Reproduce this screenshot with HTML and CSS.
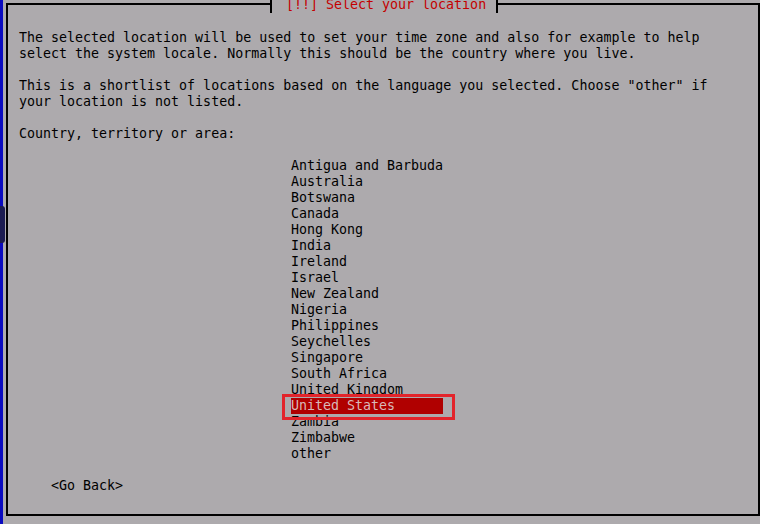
FILE: index.html
```html
<!DOCTYPE html>
<html lang="en">
<head>
<meta charset="utf-8">
<title>Select your location</title>
<link rel="stylesheet" href="styles.css">
</head>
<body>
<div class="screen">
  <div class="strip"><span class="handle"></span></div>
  <div class="stage">
    <section class="dialog">
      <header class="titlebar">
        <span class="rule"></span>
        <h1 class="title">[!!] Select your location</h1>
        <span class="rule"></span>
      </header>
      <div class="content">
        <p class="para">The selected location will be used to set your time zone and also for example to help<br>select the system locale. Normally this should be the country where you live.</p>
        <p class="para">This is a shortlist of locations based on the language you selected. Choose "other" if<br>your location is not listed.</p>
        <p class="para">Country, territory or area:</p>
        <ul class="list">
          <li class="item">Antigua and Barbuda</li>
          <li class="item">Australia</li>
          <li class="item">Botswana</li>
          <li class="item">Canada</li>
          <li class="item">Hong Kong</li>
          <li class="item">India</li>
          <li class="item">Ireland</li>
          <li class="item">Israel</li>
          <li class="item">New Zealand</li>
          <li class="item">Nigeria</li>
          <li class="item">Philippines</li>
          <li class="item">Seychelles</li>
          <li class="item">Singapore</li>
          <li class="item">South Africa</li>
          <li class="item">United Kingdom</li>
          <li class="item selected">United States<span class="mark"></span></li>
          <li class="item">Zambia</li>
          <li class="item">Zimbabwe</li>
          <li class="item">other</li>
        </ul>
        <div class="buttons"><span class="button">&lt;Go Back&gt;</span></div>
      </div>
    </section>
  </div>
</div>
</body>
</html>
```

FILE: styles.css
```css
html, body {
  margin: 0;
  padding: 0;
  background: #adaaad;
  height: 100%;
  overflow: hidden;
}

body {
  font-family: "DejaVu Sans Mono", "Liberation Mono", monospace;
  font-size: 13.3px;
  line-height: 16px;
  color: #000;
}

.screen {
  display: flex;
  width: 760px;
  height: 524px;
}

.strip {
  position: relative;
  width: 3px;
  background: #0a0ac0;
  flex: none;
}

.handle {
  position: absolute;
  left: 0;
  top: 206px;
  width: 5px;
  height: 37px;
  background: #1c1c52;
  border-radius: 0 3px 3px 0;
}

.stage {
  flex: 1;
  padding: 3px 0 0 3px;
}

.dialog {
  box-sizing: border-box;
  width: 754px;
  height: 513px;
  border: 2px solid #000;
  border-top: none;
  display: flex;
  flex-direction: column;
}

.titlebar {
  display: flex;
  align-items: center;
  height: 2px;
  margin-left: -2px;
  margin-right: -2px;
}

.rule {
  height: 2px;
  background: #000;
}

.rule:first-child {
  width: 264px;
}

.rule:last-child {
  flex: 1;
}

.title {
  margin: 0;
  flex: none;
  height: 16px;
  font-size: 13.3px;
  font-weight: normal;
  line-height: 16px;
  white-space: nowrap;
  color: #c40000;
  border-left: 2px solid #000;
  border-right: 2px solid #000;
  padding: 0 10px 0 14px;
  position: relative;
  top: 1px;
}

.content {
  padding: 25px 0 0 11px;
}

.para {
  margin: 0 0 16px;
}

.list {
  list-style: none;
  margin: 0 0 16px 272px;
  padding: 0;
}

.item {
  width: 152px;
  height: 16px;
  white-space: nowrap;
}

.selected {
  position: relative;
  background: #b00000;
  color: #d9b8b8;
}

.mark {
  position: absolute;
  left: -9px;
  top: -4px;
  width: 173px;
  height: 26px;
  box-sizing: border-box;
  border: 3px solid #e3242b;
}

.buttons {
  padding-left: 32px;
}
```
